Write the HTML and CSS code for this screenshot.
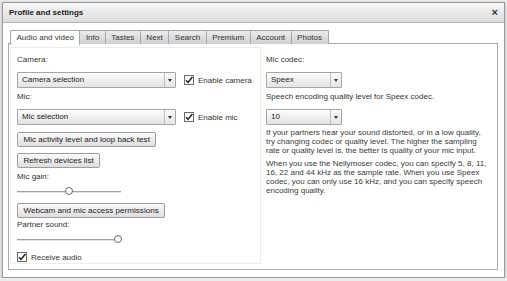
FILE: index.html
```html
<!DOCTYPE html>
<html lang="en">
  <head>
    <meta charset="UTF-8" />
    <title>Profile and settings</title>
    <link rel="stylesheet" href="styles.css">
  </head>
  <body>
    <div class="dialog">
      <div class="dialog-head">
        <span class="title">Profile and settings</span>
        <span class="btn-close">&times;</span>
      </div>
      <div class="dialog-body">
        <ul class="tabs">
          <li class="on">Audio and video</li>
          <li>Info</li>
          <li>Tastes</li>
          <li>Next</li>
          <li>Search</li>
          <li>Premium</li>
          <li>Account</li>
          <li>Photos</li>
        </ul>
        <div class="panel">
          <!-- 왼쪽 : 장치 -->
          <div class="col-left">
            <div class="label">Camera:</div>
            <div class="row">
              <div class="select wide"><span>Camera selection</span><i></i></div>
              <label class="check">
                <svg width="10" height="10" viewBox="0 0 10 10"><rect x="0.5" y="0.5" width="9" height="9" fill="#fff" stroke="#6b6b6b"/><path d="M2 5.2 L4 7.4 L8.4 2" fill="none" stroke="#222" stroke-width="1.5"/></svg>
                Enable camera
              </label>
            </div>
            <div class="label mt4">Mic:</div>
            <div class="row">
              <div class="select wide"><span>Mic selection</span><i></i></div>
              <label class="check">
                <svg width="10" height="10" viewBox="0 0 10 10"><rect x="0.5" y="0.5" width="9" height="9" fill="#fff" stroke="#6b6b6b"/><path d="M2 5.2 L4 7.4 L8.4 2" fill="none" stroke="#222" stroke-width="1.5"/></svg>
                Enable mic
              </label>
            </div>
            <button class="btn mt7">Mic activity level and loop back test</button>
            <button class="btn mt6">Refresh devices list</button>
            <div class="label mt4">Mic gain:</div>
            <div class="slider"><div class="track"><b style="left: 50%"></b></div></div>
            <button class="btn mt7">Webcam and mic access permissions</button>
            <div class="label mt2">Partner sound:</div>
            <div class="slider"><div class="track short"><b style="left: 100%"></b></div></div>
            <label class="check solo">
              <svg width="10" height="10" viewBox="0 0 10 10"><rect x="0.5" y="0.5" width="9" height="9" fill="#fff" stroke="#6b6b6b"/><path d="M2 5.2 L4 7.4 L8.4 2" fill="none" stroke="#222" stroke-width="1.5"/></svg>
              Receive audio
            </label>
          </div>
          <!-- 오른쪽 : 코덱 -->
          <div class="col-right">
            <div class="label">Mic codec:</div>
            <div class="row">
              <div class="select small"><span>Speex</span><i></i></div>
            </div>
            <div class="label mt4">Speech encoding quality level for Speex codec.</div>
            <div class="row">
              <div class="select small"><span>10</span><i></i></div>
            </div>
            <p class="desc">If your partners hear your sound distorted, or in a low quality, try changing codec or quality level. The higher the sampling rate or quality level is, the better is quality of your mic input.</p>
            <p class="desc">When you use the Nellymoser codec, you can specify 5, 8, 11, 16, 22 and 44 kHz as the sample rate. When you use Speex codec, you can only use 16 kHz, and you can specify speech encoding quality.</p>
          </div>
        </div>
      </div>
    </div>
  </body>
</html>
```

FILE: styles.css
```css
* {
  box-sizing: border-box;
}
html,
body,
ul,
li,
p {
  padding: 0;
  margin: 0;
  list-style: none;
}
body {
  background: #ececec;
  padding: 2px 2px 0;
  font-family: "Liberation Sans", Arial, sans-serif;
  font-size: 8px;
  color: #333;
}
.dialog {
  width: 503px;
  height: 276px;
  background: #fff;
  border: 1px solid #9a9a9a;
  box-shadow: 0 1px 3px rgba(0, 0, 0, 0.25);
}
.dialog-head {
  display: flex;
  justify-content: space-between;
  align-items: center;
  height: 20px;
  padding: 0 6px 0 6px;
  border-bottom: 1px solid #b5b5b5;
  background: linear-gradient(#f6f6f6, #dcdcdc);
}
.dialog-head .title {
  font-weight: bold;
  font-size: 8px;
  color: #222;
}
.btn-close {
  font-weight: bold;
  font-size: 11px;
  line-height: 1;
  color: #333;
}
.dialog-body {
  padding: 7px 6px 0 5px;
}
.tabs {
  display: flex;
  margin-left: 2px;
  height: 13px;
}
.tabs li {
  height: 14px;
  line-height: 13px;
  padding: 0 5.5px;
  border: 1px solid #a8a8a8;
  border-left: 0;
  border-bottom: 0;
  background: linear-gradient(#ececec, #cfcfcf);
  font-size: 8px;
  color: #333;
  white-space: nowrap;
}
.tabs li:first-child {
  border-left: 1px solid #a8a8a8;
}
.tabs li.on {
  position: relative;
  z-index: 1;
  height: 15px;
  background: #fff;
}
.panel {
  display: flex;
  align-items: flex-start;
  width: 490px;
  height: 227px;
  padding: 3px 1px 0 1px;
  border: 1px solid #a9a9a9;
}
.col-left {
  width: 251px;
  height: 217px;
  padding: 7px 0 0 6px;
  border: 1px solid #ededed;
  display: flex;
  flex-direction: column;
  align-items: flex-start;
}
.col-right {
  padding: 8px 0 0 5px;
  display: flex;
  flex-direction: column;
  align-items: flex-start;
}
.label {
  height: 10px;
  line-height: 10px;
  white-space: nowrap;
}
.mt2 {
  margin-top: 2px;
}
.mt4 {
  margin-top: 4px;
}
.mt6 {
  margin-top: 6px;
}
.mt7 {
  margin-top: 7px;
}
.row {
  display: flex;
  align-items: center;
  margin-top: 7px;
  height: 16px;
}
.select {
  display: flex;
  height: 16px;
  border: 1px solid #a5a5a5;
  border-radius: 1px;
  background: linear-gradient(#fdfdfd, #e2e2e2);
  color: #222;
}
.select.wide {
  width: 159px;
}
.select.small {
  width: 76px;
}
.select span {
  flex: 1;
  padding-left: 4px;
  line-height: 14px;
}
.select i {
  display: flex;
  justify-content: center;
  align-items: center;
  width: 11px;
  border-left: 1px solid #bdbdbd;
  background: linear-gradient(#fafafa, #e6e6e6);
}
.select i:before {
  content: '';
  border-left: 2.5px solid transparent;
  border-right: 2.5px solid transparent;
  border-top: 3px solid #333;
}
.check {
  display: flex;
  align-items: center;
  gap: 4px;
  margin-left: 8px;
  color: #333;
  white-space: nowrap;
}
.check.solo {
  margin: 8px 0 0 0;
  height: 10px;
}
.btn {
  height: 15px;
  padding: 0 5.5px;
  border: 1px solid #9d9d9d;
  border-radius: 2px;
  background: linear-gradient(#fafafa, #dedede);
  font-family: inherit;
  font-size: 8.1px;
  color: #222;
  white-space: nowrap;
}
.slider {
  display: flex;
  align-items: center;
  margin-top: 5px;
  height: 9px;
}
.track {
  position: relative;
  width: 104px;
  height: 2px;
  background: #a3a3a3;
  border-bottom: 1px solid #e2e2e2;
}
.track.short {
  width: 101px;
}
.track b {
  position: absolute;
  top: -4px;
  width: 8px;
  height: 8px;
  margin-left: -4px;
  border: 1px solid #6a6a6a;
  border-radius: 100%;
  background: #fff;
}
.desc {
  width: 221px;
  margin-top: 3px;
  line-height: 9px;
  color: #3a3a3a;
}
.desc + .desc {
  margin-top: 4px;
}
```
